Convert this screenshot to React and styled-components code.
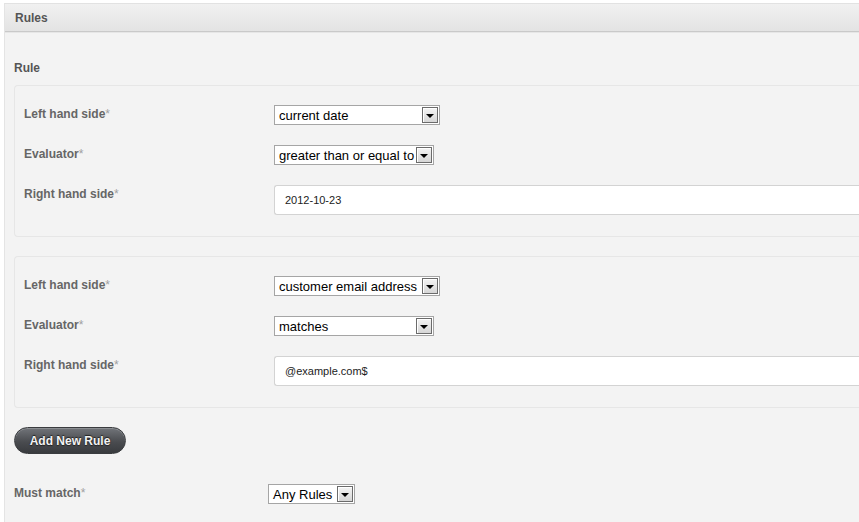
import React from "react";
import styled, { createGlobalStyle } from "styled-components";

const GlobalStyle = createGlobalStyle`
  html, body {
    margin: 0;
    padding: 0;
    background: #ffffff;
    overflow: hidden;
  }
  body {
    font-family: "Liberation Sans", Arial, sans-serif;
  }
`;

const Page = styled.div`
  width: 859px;
  height: 522px;
  overflow: hidden;
  padding: 3px 0 0 4px;
  box-sizing: border-box;
`;

const Panel = styled.div`
  width: 900px;
  background: #f3f3f3;
  border-left: 1px solid #e4e4e4;
  border-top: 1px solid #e2e2e2;
  min-height: 540px;
`;

const PanelHeader = styled.div`
  height: 27px;
  padding-left: 10px;
  display: flex;
  align-items: center;
  background: linear-gradient(#f1f1f1, #e3e3e3);
  border-bottom: 1px solid #c9c9c9;
  box-shadow: 0 1px 0 #e6e6e6;
  font-size: 12px;
  font-weight: bold;
  color: #555555;
`;

const PanelBody = styled.div`
  padding: 29px 0 0 9px;
`;

const SectionTitle = styled.div`
  font-size: 12px;
  font-weight: bold;
  color: #555555;
  line-height: 14px;
  margin-bottom: 10px;
`;

const RuleBox = styled.div`
  border: 1px solid #e6e6e6;
  border-right: none;
  border-radius: 4px 0 0 4px;
  padding: 19px 0 21px 9px;
  margin-bottom: 19px;
  display: flex;
  flex-direction: column;
  gap: 20px;
`;

const Row = styled.div`
  display: grid;
  grid-template-columns: ${(p) => p.$labelWidth || 250}px 1fr;
  align-items: start;
`;

const Label = styled.div`
  font-size: 12px;
  font-weight: bold;
  color: #666666;
  line-height: 14px;
  padding-top: 2px;
`;

const Star = styled.span`
  color: #a0a0a0;
  font-weight: normal;
`;

const SelectBox = styled.div`
  width: ${(p) => p.$width}px;
  height: 20px;
  box-sizing: border-box;
  border: 1px solid #a5a5a5;
  background: #ffffff;
  display: flex;
  align-items: center;
  justify-content: space-between;
  gap: 2px;
  padding: 0 1px 0 4px;
  font-size: 13px;
  color: #000000;
  white-space: nowrap;
`;

const ArrowButton = styled.div`
  flex: none;
  width: 16px;
  height: 16px;
  box-sizing: border-box;
  border: 1px solid #6b6b6b;
  background: linear-gradient(#f4f4f4, #d6d6d6);
  display: flex;
  align-items: center;
  justify-content: center;
  box-shadow: inset 1px 1px 0 #ffffff;
`;

const Arrow = styled.div`
  width: 0;
  height: 0;
  border-left: 4px solid transparent;
  border-right: 4px solid transparent;
  border-top: 4px solid #000000;
  margin-top: 1px;
`;

const TextInput = styled.div`
  height: 30px;
  box-sizing: border-box;
  border: 1px solid #d3d3d3;
  border-right: none;
  border-radius: 3px 0 0 3px;
  background: #ffffff;
  display: flex;
  align-items: center;
  padding-left: 10px;
  font-size: 11px;
  color: #222222;
`;

const AddButton = styled.button`
  display: block;
  margin-top: 1px;
  height: 27px;
  width: 112px;
  border-radius: 14px;
  border: 1px solid #3a3c3f;
  background: linear-gradient(#717479, #4a4c50 55%, #393b3e);
  box-shadow: inset 0 1px 0 #8a8d91;
  color: #f2f2f2;
  font-family: "Liberation Sans", Arial, sans-serif;
  font-size: 12px;
  font-weight: bold;
  text-shadow: 0 -1px 1px #222, 0 1px 1px #222;
  padding: 0;
  cursor: pointer;
`;

const MustMatch = styled.div`
  margin-top: 30px;
`;

function Select({ value, width }) {
  return (
    <SelectBox $width={width}>
      <span>{value}</span>
      <ArrowButton>
        <Arrow />
      </ArrowButton>
    </SelectBox>
  );
}

function Field({ label, children, labelWidth }) {
  return (
    <Row $labelWidth={labelWidth}>
      <Label>
        {label}
        <Star>*</Star>
      </Label>
      <div>{children}</div>
    </Row>
  );
}

const rules = [
  { lhs: "current date", lhsWidth: 166, ev: "greater than or equal to", evWidth: 160, rhs: "2012-10-23" },
  { lhs: "customer email address", lhsWidth: 166, ev: "matches", evWidth: 160, rhs: "@example.com$" },
];

export default function App() {
  return (
    <>
      <GlobalStyle />
      <Page>
        <Panel>
          <PanelHeader>Rules</PanelHeader>
          <PanelBody>
            <SectionTitle>Rule</SectionTitle>
            {rules.map((r, i) => (
              <RuleBox key={i}>
                <Field label="Left hand side">
                  <Select value={r.lhs} width={r.lhsWidth} />
                </Field>
                <Field label="Evaluator">
                  <Select value={r.ev} width={r.evWidth} />
                </Field>
                <Field label="Right hand side">
                  <TextInput>{r.rhs}</TextInput>
                </Field>
              </RuleBox>
            ))}
            <AddButton>Add New Rule</AddButton>
            <MustMatch>
              <Field label="Must match" labelWidth={254}>
                <Select value="Any Rules" width={87} />
              </Field>
            </MustMatch>
          </PanelBody>
        </Panel>
      </Page>
    </>
  );
}
